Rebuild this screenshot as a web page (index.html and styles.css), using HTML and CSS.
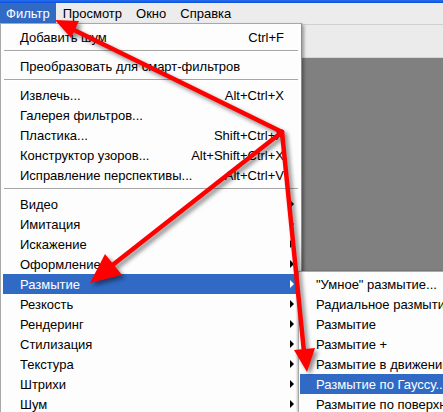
FILE: index.html
```html
<!DOCTYPE html>
<html lang="ru">
<head>
    <meta charset="UTF-8">
    <title>Фильтр</title>
    <link rel="stylesheet" href="styles.css">
</head>
<body>
    <div class="window">
        <div class="titlebar"></div>
        <div class="menubar">
            <span class="menubar-item active">Фильтр</span>
            <span class="menubar-item">Просмотр</span>
            <span class="menubar-item">Окно</span>
            <span class="menubar-item">Справка</span>
        </div>
        <div class="workspace">
            <div class="options-bar"></div>
            <div class="canvas"></div>
        </div>

        <!-- выпадающее меню Фильтр -->
        <div class="menu">
            <div class="menu-row"><span>Добавить шум</span><span class="shortcut">Ctrl+F</span></div>
            <div class="separator"></div>
            <div class="menu-row"><span>Преобразовать для смарт-фильтров</span></div>
            <div class="separator"></div>
            <div class="menu-row"><span>Извлечь...</span><span class="shortcut">Alt+Ctrl+X</span></div>
            <div class="menu-row"><span>Галерея фильтров...</span></div>
            <div class="menu-row"><span>Пластика...</span><span class="shortcut">Shift+Ctrl+X</span></div>
            <div class="menu-row"><span>Конструктор узоров...</span><span class="shortcut">Alt+Shift+Ctrl+X</span></div>
            <div class="menu-row"><span>Исправление перспективы...</span><span class="shortcut">Alt+Ctrl+V</span></div>
            <div class="separator"></div>
            <div class="menu-row sub"><span>Видео</span></div>
            <div class="menu-row sub"><span>Имитация</span></div>
            <div class="menu-row sub"><span>Искажение</span></div>
            <div class="menu-row sub"><span>Оформление</span></div>
            <div class="menu-row sub selected"><span>Размытие</span></div>
            <div class="menu-row sub"><span>Резкость</span></div>
            <div class="menu-row sub"><span>Рендеринг</span></div>
            <div class="menu-row sub"><span>Стилизация</span></div>
            <div class="menu-row sub"><span>Текстура</span></div>
            <div class="menu-row sub"><span>Штрихи</span></div>
            <div class="menu-row sub"><span>Шум</span></div>
        </div>

        <!-- подменю Размытие -->
        <div class="submenu">
            <div class="menu-row"><span>"Умное" размытие...</span></div>
            <div class="menu-row"><span>Радиальное размытие...</span></div>
            <div class="menu-row"><span>Размытие</span></div>
            <div class="menu-row"><span>Размытие +</span></div>
            <div class="menu-row"><span>Размытие в движении...</span></div>
            <div class="menu-row selected"><span>Размытие по Гауссу...</span></div>
            <div class="menu-row"><span>Размытие по поверхности...</span></div>
        </div>

        <svg class="arrows" width="443" height="412" viewBox="0 0 443 412">
            <g stroke="#ff0000" stroke-width="4.5" stroke-linecap="round" fill="none">
                <line x1="282" y1="132" x2="72" y2="29"/>
                <line x1="282" y1="132" x2="110" y2="267"/>
                <line x1="282" y1="132" x2="304" y2="352"/>
            </g>
            <g fill="#ff0000">
                <polygon points="55,20 79,21 71,38"/>
                <polygon points="90,283 105,254 122,275"/>
                <polygon points="307,372 294,350 315,348"/>
            </g>
        </svg>
    </div>
</body>
</html>
```

FILE: styles.css
```css
* {
    margin: 0;
    padding: 0;
    box-sizing: border-box;
}

body {
    width: 443px;
    height: 412px;
    overflow: hidden;
    background: #808080;
    font-family: 'Liberation Sans', Arial, sans-serif;
    font-size: 13px;
    color: #000;
}

.window {
    position: relative;
    width: 443px;
    height: 412px;
    overflow: hidden;
    display: flex;
    flex-direction: column;
}

.titlebar {
    height: 3px;
    background: linear-gradient(#2a6ff0, #0a4fd8);
}

.menubar {
    height: 21px;
    display: flex;
    align-items: stretch;
    background: #ececec;
}

.menubar-item {
    display: flex;
    align-items: center;
    padding: 0 7px;
}

.menubar-item.active {
    background: #316ac5;
    color: #fff;
    padding: 0 6px;
}

.workspace {
    flex: 1;
    display: flex;
    flex-direction: column;
}

.options-bar {
    height: 34px;
    background: #ebebeb;
    border-top: 1px solid #d0d0d0;
    border-bottom: 1px solid #d6d6d6;
}

.canvas {
    flex: 1;
    background: #808080;
}

.menu {
    position: absolute;
    left: 0;
    top: 23px;
    bottom: 0;
    width: 302px;
    overflow: hidden;
    background: #fdfdfd;
    border: 1px solid #a8a8a8;
    border-right-color: #8c8c8c;
    border-bottom: none;
    padding: 3px 2px 0;
    box-shadow: 2px 2px 3px rgba(0, 0, 0, 0.35);
}

.menu-row {
    height: 20px;
    flex-shrink: 0;
    display: flex;
    align-items: center;
    justify-content: space-between;
    padding: 0 15px 0 17px;
    white-space: nowrap;
    position: relative;
}

.shortcut {
    margin-left: 10px;
}

.menu-row.sub::after {
    content: "";
    position: absolute;
    right: 5px;
    top: 6px;
    border-left: 4px solid #000;
    border-top: 4px solid transparent;
    border-bottom: 4px solid transparent;
}

.menu-row.selected {
    background: #316ac5;
    color: #fff;
}

.menu-row.sub.selected::after {
    border-left-color: #fff;
}

.separator {
    height: 9px;
    margin: 0 1px;
    position: relative;
}

.separator::before {
    content: "";
    position: absolute;
    left: 0;
    right: 0;
    top: 3px;
    border-top: 1px solid #a6a6a6;
    border-bottom: 1px solid #fff;
}

/* подменю уходит за правый край окна */
.submenu {
    position: absolute;
    left: 298px;
    right: 0;
    top: 271px;
    bottom: 0;
    overflow: hidden;
    background: #fdfdfd;
    border: 1px solid #a8a8a8;
    border-right: none;
    border-bottom: none;
    padding: 2px 0 0 1px;
    box-shadow: -1px 0 2px rgba(0, 0, 0, 0.25);
}

.submenu .menu-row {
    padding-left: 16px;
    padding-right: 0;
    justify-content: flex-start;
}

.arrows {
    position: absolute;
    left: 0;
    top: 0;
    pointer-events: none;
    filter: drop-shadow(3px 3px 2px rgba(0, 0, 0, 0.45));
}
```
